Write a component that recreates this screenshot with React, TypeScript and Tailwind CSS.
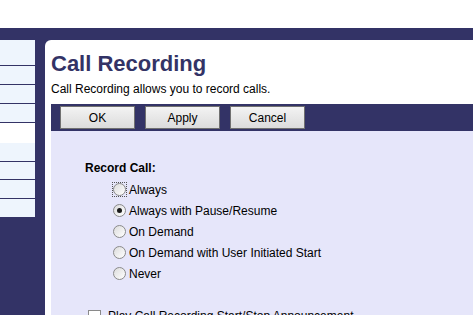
import React from 'react';

const font = { fontFamily: '"Liberation Sans", Arial, sans-serif' };

const navRows = [
  { h: 'h-[26px]', kind: 'light' },
  { h: 'h-[19px]', kind: 'light' },
  { h: 'h-[19px]', kind: 'light' },
  { h: 'h-[19px]', kind: 'light' },
  { h: 'h-[20px]', kind: 'blank' },
  { h: 'h-[19px]', kind: 'light' },
  { h: 'h-[18px]', kind: 'light' },
  { h: 'h-[19px]', kind: 'light' },
  { h: 'h-[18px]', kind: 'last' },
];

const options = [
  { label: 'Always', checked: false, focused: true },
  { label: 'Always with Pause/Resume', checked: true, focused: false },
  { label: 'On Demand', checked: false, focused: false },
  { label: 'On Demand with User Initiated Start', checked: false, focused: false },
  { label: 'Never', checked: false, focused: false },
];

function Radio({ checked, focused }: { checked: boolean; focused: boolean }) {
  return (
    <span
      className={`flex items-center justify-center w-[15px] h-[15px] ${
        focused ? 'border border-dotted border-[#555]' : 'border border-transparent'
      }`}
    >
      <span className="flex items-center justify-center w-[13px] h-[13px] rounded-full border border-[#8a8a8a] bg-gradient-to-br from-[#dcdcdc] to-white">
        {checked && <span className="w-[5px] h-[5px] rounded-full bg-[#1a1a1a]" />}
      </span>
    </span>
  );
}

function ToolButton({ label }: { label: string }) {
  return (
    <button className="w-[75px] h-[23px] border border-[#707070] bg-gradient-to-b from-[#f3f3f3] to-[#dcdcdc] text-[12px] text-black leading-none">
      {label}
    </button>
  );
}

export default function App() {
  return (
    <div className="w-[473px] h-[315px] overflow-hidden bg-white flex flex-col" style={font}>
      <div className="h-[28px] bg-white flex-shrink-0" />
      <div className="flex-1 bg-[#333366] flex pt-[12px] min-h-0">
        {/* Left nav */}
        <div className="w-[35px] flex-shrink-0 flex flex-col">
          {navRows.map((r, i) => (
            <div
              key={i}
              className={`${r.h} ${
                r.kind === 'blank'
                  ? 'bg-white'
                  : r.kind === 'last'
                  ? 'bg-[#eef5fd]'
                  : 'bg-[#eef5fd] border-b border-[#333366]'
              }`}
            />
          ))}
        </div>
        <div className="w-[10px] flex-shrink-0" />

        {/* Main panel */}
        <div className="flex-1 bg-white rounded-tl-[6px] pl-[6px] flex flex-col min-w-0">
          <h1 className="text-[22px] font-bold text-[#333366] leading-none mt-[13px] whitespace-nowrap">
            Call Recording
          </h1>
          <p className="text-[12px] text-black leading-none mt-[8px] whitespace-nowrap">
            Call Recording allows you to record calls.
          </p>
          <div className="h-[27px] bg-[#333366] mt-[9px] flex items-start gap-[10px] pl-[9px] pt-[2px] flex-shrink-0">
            <ToolButton label="OK" />
            <ToolButton label="Apply" />
            <ToolButton label="Cancel" />
          </div>
          <div className="flex-1 bg-[#e6e6fa] pl-[34px] pt-[31px]">
            <div className="text-[12px] font-bold text-black leading-none">Record Call:</div>
            <div className="flex flex-col gap-[6px] mt-[8px] pl-[27px]">
              {options.map((o) => (
                <label key={o.label} className="flex items-center gap-[2px] h-[15px] text-[12px] text-black whitespace-nowrap">
                  <Radio checked={o.checked} focused={o.focused} />
                  <span>{o.label}</span>
                </label>
              ))}
            </div>
            <label className="flex items-center gap-[7px] mt-[26px] pl-[3px] text-[12px] text-black whitespace-nowrap">
              <span className="w-[13px] h-[13px] border border-[#8a8a8a] bg-white" />
              <span>Play Call Recording Start/Stop Announcement</span>
            </label>
          </div>
        </div>
      </div>
    </div>
  );
}
